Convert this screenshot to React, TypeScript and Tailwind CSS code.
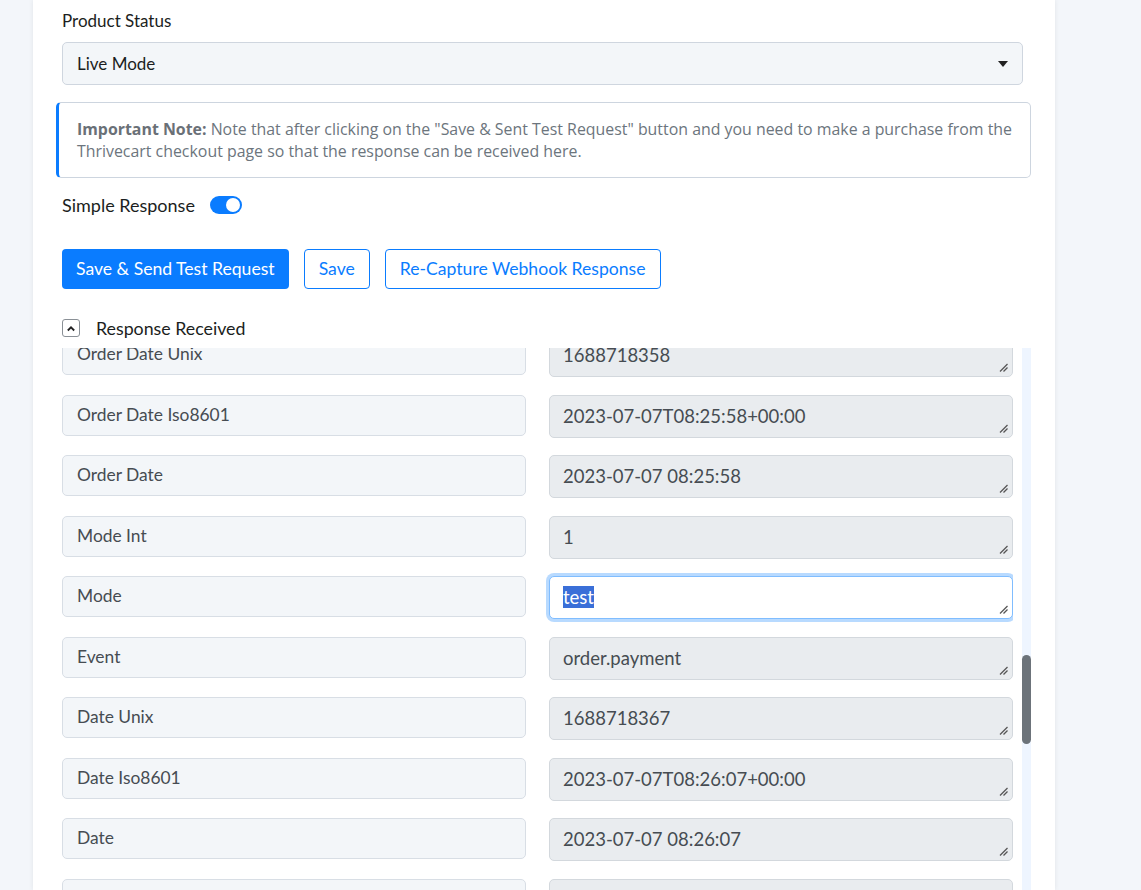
import React from "react";

const rows: { label: string; value: string; focused?: boolean }[] = [
  { label: "Order Date Unix", value: "1688718358" },
  { label: "Order Date Iso8601", value: "2023-07-07T08:25:58+00:00" },
  { label: "Order Date", value: "2023-07-07 08:25:58" },
  { label: "Mode Int", value: "1" },
  { label: "Mode", value: "test", focused: true },
  { label: "Event", value: "order.payment" },
  { label: "Date Unix", value: "1688718367" },
  { label: "Date Iso8601", value: "2023-07-07T08:26:07+00:00" },
  { label: "Date", value: "2023-07-07 08:26:07" },
  { label: "Order Id", value: "5689210" },
];

function Grip() {
  return (
    <svg
      className="absolute right-[4px] bottom-[4px]"
      width="9"
      height="9"
      viewBox="0 0 9 9"
    >
      <line x1="8.5" y1="1" x2="1" y2="8.5" stroke="#555" strokeWidth="1.2" />
      <line x1="8.5" y1="4.5" x2="4.5" y2="8.5" stroke="#555" strokeWidth="1.2" />
    </svg>
  );
}

export default function App() {
  return (
    <div className="h-[890px] overflow-hidden bg-[#f3f6fa] font-['Lato',sans-serif]">
      <div className="ml-[33px] w-[1022px] h-full bg-white shadow-[0_0_5px_rgba(0,0,0,0.08)] flex flex-col pl-[29px] pr-[24px] pt-[9px]">
        <div className="text-[17px] leading-[24px] text-[#1b1e21]">Product Status</div>
        <div className="mt-[9px] mr-[8px] h-[43px] rounded-[5px] border border-[#cfd6df] bg-[#f3f6f9] flex items-center justify-between pl-[14px] pr-[14px] text-[17px] text-[#1b1e21]">
          <span>Live Mode</span>
          <svg width="10" height="6" viewBox="0 0 10 6">
            <path d="M0 0 L10 0 L5 6 Z" fill="#222" />
          </svg>
        </div>

        <div className="mt-[17px] ml-[-6px] h-[76px] rounded-[5px] border border-[#cdd5df] border-l-[3px] border-l-[#0a7cff] pl-[18px] pr-[16px] pt-[15px] font-['Open_Sans',sans-serif] text-[15.9px] leading-[22px] text-[#6c757d] whitespace-nowrap">
          <span className="font-bold text-[#6a7077]">Important Note:</span> Note that after clicking on the "Save &amp; Sent Test Request" button and you need to make a purchase from the
          <br />
          Thrivecart checkout page so that the response can be received here.
        </div>

        <div className="mt-[15px] flex items-center h-[24px]">
          <span className="text-[18px] text-[#1b1e21]">Simple Response</span>
          <div className="ml-[15px] w-[32px] h-[18px] rounded-full bg-[#0a7cff] flex items-center justify-end pr-[2px]">
            <div className="w-[14px] h-[14px] rounded-full bg-white" />
          </div>
        </div>

        <div className="mt-[32px] flex gap-[15px]">
          <button className="h-[40px] px-[14px] rounded-[4px] bg-[#0a7cff] text-white text-[17.6px]">
            Save &amp; Send Test Request
          </button>
          <button className="h-[40px] px-[14px] rounded-[4px] border border-[#0a7cff] text-[#0a7cff] text-[17.6px]">
            Save
          </button>
          <button className="h-[40px] px-[14px] rounded-[4px] border border-[#0a7cff] text-[#0a7cff] text-[17.6px]">
            Re-Capture Webhook Response
          </button>
        </div>

        <div className="mt-[27px] flex items-center h-[24px]">
          <div className="w-[18px] h-[18px] rounded-[3px] border border-[#8a9096] flex items-center justify-center">
            <svg width="10" height="7" viewBox="0 0 10 7">
              <path d="M1.8 5.5 L5 2.3 L8.2 5.5" fill="none" stroke="#222" strokeWidth="1.8" />
            </svg>
          </div>
          <span className="ml-[16px] text-[17.8px] text-[#1b1e21]">Response Received</span>
        </div>

        <div className="mt-[8px] flex-1 flex min-h-0">
          <div className="w-[951px] overflow-hidden">
            <div className="-mt-[14px] flex flex-col gap-[17.5px]">
              {rows.map((r) => (
                <div key={r.label} className="grid grid-cols-[464px_464px] gap-[23px] h-[43px]">
                  <div className="h-[41px] rounded-[5px] border border-[#d8dee5] bg-[#f3f6f9] pl-[14px] flex items-center text-[17.4px] text-[#464c52]">
                    {r.label}
                  </div>
                  {r.focused ? (
                    <div className="relative h-[43px] rounded-[5px] border border-[#80bdff] bg-white shadow-[0_0_0_3px_rgba(0,123,255,0.28)] pl-[13px] pt-[7px] text-[18.5px] leading-[27px] text-white">
                      <span className="bg-[#3a6fd8]">{r.value}</span>
                      <Grip />
                    </div>
                  ) : (
                    <div className="relative h-[43px] rounded-[5px] border border-[#d3d8dd] bg-[#e9ecef] pl-[13px] pt-[7px] text-[18.5px] leading-[27px] text-[#464c52]">
                      {r.value}
                      <Grip />
                    </div>
                  )}
                </div>
              ))}
            </div>
          </div>
          <div className="ml-[9px] w-[9px] bg-[#eef5ff] flex flex-col">
            <div className="mt-[307px] h-[89px] w-[9px] rounded-full bg-[#6c737a]" />
          </div>
        </div>
      </div>
    </div>
  );
}
